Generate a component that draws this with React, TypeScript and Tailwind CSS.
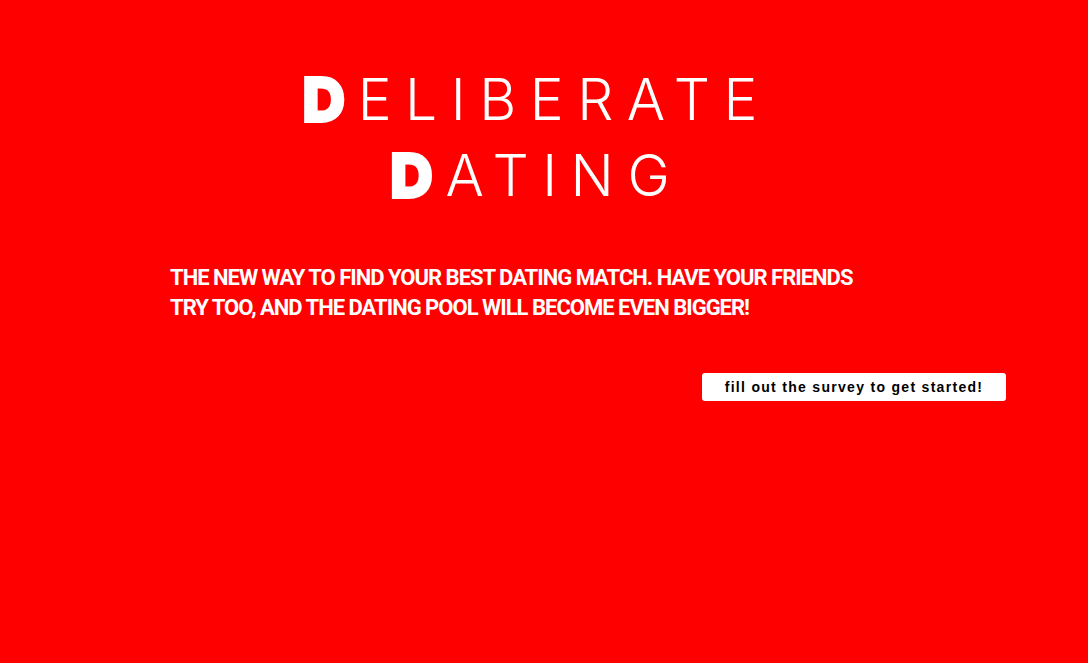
export default function App() {
  return (
    <main className="min-h-screen w-full bg-[#ff0000] text-white">
      {/* Title */}
      <div className="flex flex-col items-center pt-[62px] font-['Inter',sans-serif] font-light text-[57px] leading-[76px] tracking-[13.5px]">
        <h1 className="pr-[14px]">
          <span className="font-semibold [-webkit-text-stroke:6px_white]">D</span>ELIBERATE
        </h1>
        <h1 className="pr-[14px]">
          <span className="font-semibold [-webkit-text-stroke:6px_white]">D</span>ATING
        </h1>
      </div>

      {/* Tagline */}
      <p className="mt-[49px] ml-[170px] whitespace-nowrap font-['Roboto',sans-serif] font-bold text-[22px] tracking-[-1px] leading-[30px] uppercase">
        The new way to find your best dating match. Have your friends
        <br />
        try too, and the dating pool will become even bigger!
      </p>

      {/* Survey button */}
      <div className="flex justify-end pr-[82px] mt-[50px]">
        <button className="w-[304px] h-[28px] bg-white rounded-[3px] text-black font-['Liberation_Sans',sans-serif] font-bold text-[14px] tracking-[1.3px]">
          fill out the survey to get started!
        </button>
      </div>
    </main>
  );
}
